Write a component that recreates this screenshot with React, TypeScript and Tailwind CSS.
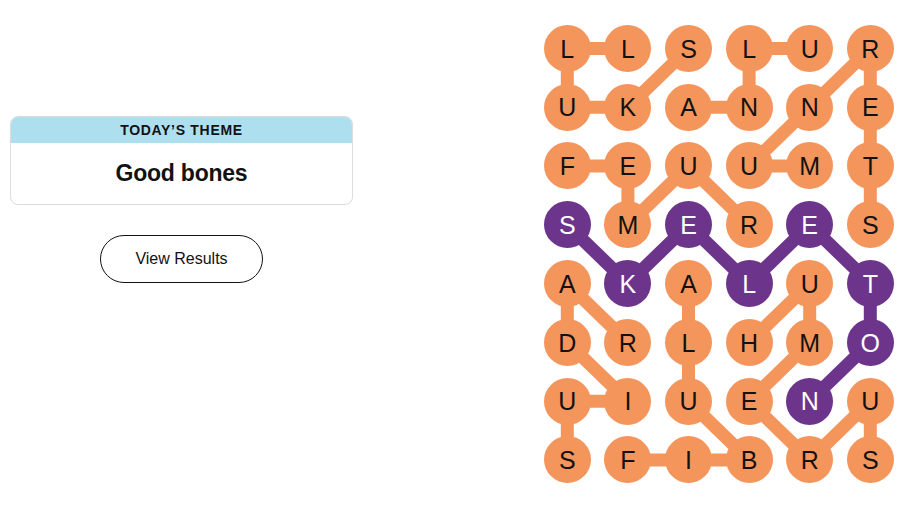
import React from "react";

const GRID = ["LLSLUR", "UKANNE", "FEUUMT", "SMERES", "AKALUT", "DRLHMO", "UIUENU", "SFIBRS"];
const CW = 60.6;
const CH = 58.8;

const ORANGE_PATHS: number[][][] = [
  [[0, 2], [1, 1], [1, 0], [0, 0], [0, 1]],
  [[0, 4], [0, 3], [1, 3], [1, 2]],
  [[3, 5], [2, 5], [1, 5], [0, 5], [1, 4], [2, 3], [2, 4]],
  [[2, 0], [2, 1], [3, 1], [2, 2], [3, 3]],
  [[5, 1], [4, 0], [5, 0], [6, 1], [6, 0], [7, 0]],
  [[7, 1], [7, 2], [7, 3], [6, 2], [5, 2], [4, 2]],
  [[5, 3], [4, 4], [5, 4], [6, 3], [7, 4], [6, 5], [7, 5]],
];
const PURPLE_PATH: number[][] = [[3, 0], [4, 1], [3, 2], [4, 3], [3, 4], [4, 5], [5, 5], [6, 4]];
const purpleSet = new Set(PURPLE_PATH.map(([r, c]) => `${r},${c}`));

const pts = (p: number[][]) => p.map(([r, c]) => `${30.3 + c * CW},${29.4 + r * CH}`).join(" ");

export default function App() {
  return (
    <div className="flex w-[906px] h-[509px] bg-white overflow-hidden" style={{ fontFamily: "'Liberation Sans', Arial, sans-serif" }}>
      <div className="pl-[10px] pt-[116px] w-[353px] shrink-0">
        <div className="w-[343px] border border-[#dcdcdc] rounded-[8px] overflow-hidden">
          <div className="h-[26px] bg-[#aedfee] flex items-center justify-center text-[14px] font-bold tracking-[0.05em] text-[#121212] uppercase">
            Today’s Theme
          </div>
          <div className="h-[61px] flex items-center justify-center text-[23px] font-bold text-[#121212] tracking-[-0.01em]">
            Good bones
          </div>
        </div>
        <div className="flex justify-center mt-[30px]">
          <button className="w-[163px] h-[48px] rounded-full border border-[#121212] text-[16px] text-[#121212] bg-white">
            View Results
          </button>
        </div>
      </div>
      <div className="ml-[184px] mt-[19px] relative w-[364px] h-[471px] shrink-0">
        <svg className="absolute inset-0" width="364" height="471">
          {ORANGE_PATHS.map((p, i) => (
            <polyline key={i} points={pts(p)} fill="none" stroke="#f4955c" strokeWidth={13} strokeLinejoin="round" strokeLinecap="round" />
          ))}
          <polyline points={pts(PURPLE_PATH)} fill="none" stroke="#6c358b" strokeWidth={13} strokeLinejoin="round" strokeLinecap="round" />
        </svg>
        <div className="relative grid grid-cols-[repeat(6,60.6px)] grid-rows-[repeat(8,58.8px)]">
          {GRID.map((row, r) =>
            row.split("").map((ch, c) => {
              const purple = purpleSet.has(`${r},${c}`);
              return (
                <div key={`${r}-${c}`} className="flex items-center justify-center">
                  <div
                    className={
                      purple
                        ? "w-[47px] h-[47px] rounded-full bg-[#6c358b] text-white flex items-center justify-center text-[25px] pt-[2px]"
                        : "w-[47px] h-[47px] rounded-full bg-[#f4955c] text-[#121212] flex items-center justify-center text-[25px] pt-[2px]"
                    }
                  >
                    {ch}
                  </div>
                </div>
              );
            })
          )}
        </div>
      </div>
    </div>
  );
}
